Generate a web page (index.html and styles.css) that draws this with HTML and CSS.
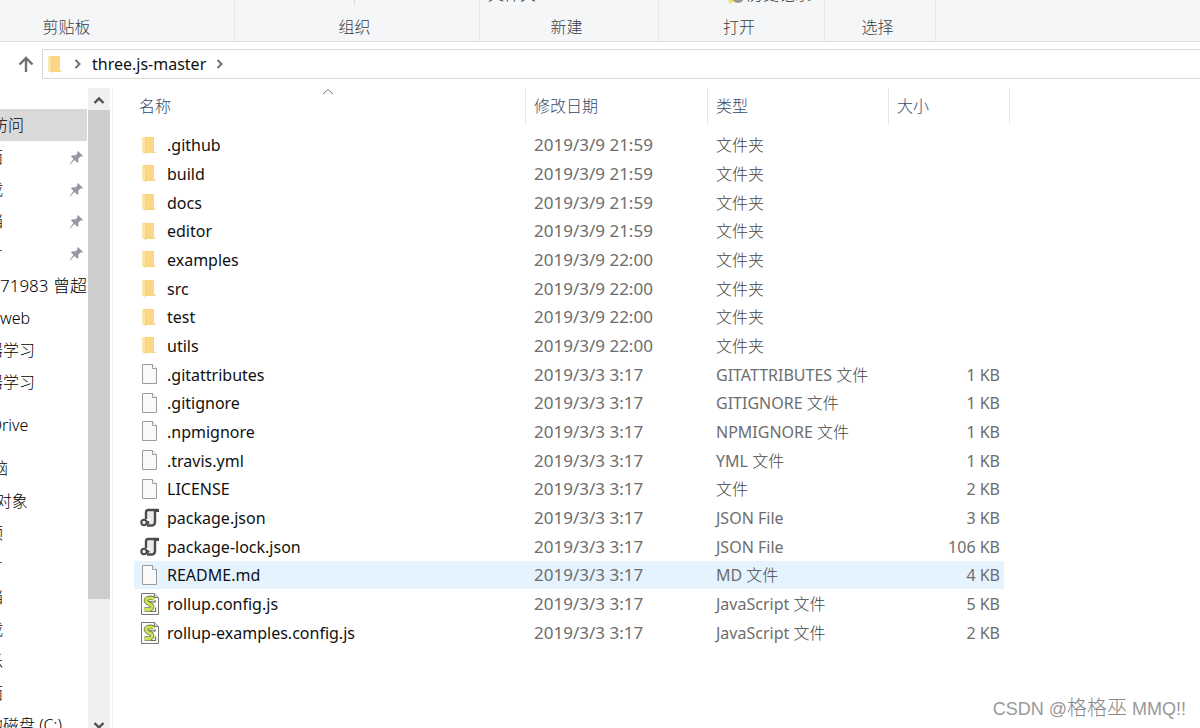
FILE: index.html
```html
<!DOCTYPE html>
<html lang="zh-CN">
<head>
<meta charset="utf-8">
<title>three.js-master</title>
<link rel="stylesheet" href="styles.css">
<script src="files.js" defer></script>
</head>
<body>
<svg class="sprites" aria-hidden="true">
  <symbol id="folder" viewBox="0 0 14 19">
    <path d="M.5 1h11.500v14l1.500 1v1H4L.5 16z" fill="#f8d580"/>
    <path d="M.5 1L4 2.500v16L.5 16.500z" fill="#fbe4a2"/>
    <path d="M4 2.500h7.500v13H4z" fill="#fad888"/>
    <path d="M3.500 3h.8v14h-.8z" fill="#efc76c"/>
  </symbol>
  <symbol id="file" viewBox="0 0 18 21">
    <path d="M1.500 .5h10l4 4v15h-14z" fill="#f9f9f9" stroke="#9c9c9c"/>
    <path d="M11.500 .5v4h4" fill="#fff" stroke="#9c9c9c"/>
  </symbol>
  <symbol id="json" viewBox="0 0 20 20">
    <path d="M6 3h9v13h-5V11H6z" fill="#ececec"/>
    <path d="M6 11V4Q6 2 8.500 2H18.500M15 2.500V14Q15 17.500 11 17.500H7" fill="none" stroke="#4b4b4b" stroke-width="2.400"/>
    <path d="M16 1h3v3h-3z" fill="#4b4b4b"/>
    <circle cx="4" cy="14.500" r="2.700" fill="#eee" stroke="#4b4b4b" stroke-width="2"/>
    <circle cx="8" cy="14.500" r="1.500" fill="#4b4b4b"/>
  </symbol>
  <symbol id="js" viewBox="0 0 20 22">
    <path d="M1.500 .5h13l4 4v17h-17z" fill="#fcfcfc" stroke="#777"/>
    <path d="M14.500 .5v4h4" fill="#ddd" stroke="#777"/>
    <path d="M14 6Q12 4 7.500 5.300Q4.500 7 7 9.500L11.500 12Q13.500 14.500 10 16.500H4.500" fill="none" stroke="#6f7746" stroke-width="4.400"/>
    <path d="M14 6Q12 4 7.500 5.300Q4.500 7 7 9.500L11.500 12Q13.500 14.500 10 16.500H4.500" fill="none" stroke="#cfe05a" stroke-width="2.800"/>
    <path d="M9 8.500l6 .5v-2M10 18.500h5.500v-4" fill="none" stroke="#6f7746" stroke-width="1.200"/>
  </symbol>
  <symbol id="pin" viewBox="0 0 15 15">
    <path d="M9 1l5 5-1.500 .8-1-.3-2.300 2.500.3 2.600-1.300 1.200L5.500 10 1 14.500.5 14 4.500 9 2 6.500 3.300 5.300 6 5.600 8.500 3.300 8.200 2z" fill="#9599a0"/>
  </symbol>
  <symbol id="chevron" viewBox="0 0 8 10">
    <path d="M1.500 1l4 4-4 4" fill="none" stroke="#707070" stroke-width="2"/>
  </symbol>
</svg>

<header class="ribbon">
  <section class="group clipboard"><h2 class="caption">剪贴板</h2></section>
  <section class="group organize"><span class="tick"></span><h2 class="caption">组织</h2></section>
  <section class="group create"><button class="tool">文件夹</button><h2 class="caption">新建</h2></section>
  <section class="group open"><button class="tool history"><svg width="18" height="20" viewBox="0 0 18 20"><path d="M0 6h6v13H2z" fill="#f3e36b"/><circle cx="11" cy="13" r="6" fill="#999"/></svg>历史记录</button><h2 class="caption">打开</h2></section>
  <section class="group select"><h2 class="caption">选择</h2></section>
</header>

<div class="address">
  <button class="up" aria-label="向上"><svg width="16" height="17" viewBox="0 0 16 17"><path d="M8 16V2M1.500 8.500L8 2l6.500 6.500" fill="none" stroke="#707070" stroke-width="2.400"/></svg></button>
  <nav class="path" aria-label="路径">
    <svg class="folder" width="14" height="19"><use href="#folder"/></svg>
    <svg width="8" height="10"><use href="#chevron"/></svg>
    <a href="#" class="crumb">three.js-master</a>
    <svg width="8" height="10"><use href="#chevron"/></svg>
  </nav>
</div>

<main class="main">
  <nav class="tree" aria-label="导航窗格">
    <a href="#" class="node current">快速访问</a>
    <a href="#" class="node child">桌面<svg class="pin"><use href="#pin"/></svg></a>
    <a href="#" class="node child">下载<svg class="pin"><use href="#pin"/></svg></a>
    <a href="#" class="node child">文档<svg class="pin"><use href="#pin"/></svg></a>
    <a href="#" class="node child">图片<svg class="pin"><use href="#pin"/></svg></a>
    <a href="#" class="node flush wide">71983 曾超</a>
    <a href="#" class="node flush">web</a>
    <a href="#" class="node child">机器学习</a>
    <a href="#" class="node child">机器学习</a>
    <a href="#" class="node root">OneDrive</a>
    <a href="#" class="node root">此电脑</a>
    <a href="#" class="node child">3D 对象</a>
    <a href="#" class="node child">视频</a>
    <a href="#" class="node child">图片</a>
    <a href="#" class="node child">文档</a>
    <a href="#" class="node child">下载</a>
    <a href="#" class="node child">音乐</a>
    <a href="#" class="node child">桌面</a>
    <a href="#" class="node child">本地磁盘 (C:)</a>
  </nav>
  <div class="scrollbar">
    <button class="arrow" aria-label="向上滚动"><svg width="12" height="8" viewBox="0 0 12 8"><path d="M1.500 7L6 2.500 10.500 7" fill="none" stroke="#505050" stroke-width="2.400"/></svg></button>
    <div class="track"><div class="thumb"></div></div>
    <button class="arrow" aria-label="向下滚动"><svg width="12" height="8" viewBox="0 0 12 8"><path d="M1.500 1L6 5.500 10.500 1" fill="none" stroke="#505050" stroke-width="2.400"/></svg></button>
  </div>
  <section class="content">
    <table class="files">
      <colgroup><col class="c-name"><col class="c-date"><col class="c-type"><col class="c-size"><col class="c-end"></colgroup>
      <thead>
        <tr>
          <th><span class="head first">名称</span><svg class="sort" width="12" height="7" viewBox="0 0 12 7"><path d="M1 6l5-4.500L11 6" fill="none" stroke="#777"/></svg></th>
          <th><span class="head">修改日期</span></th>
          <th><span class="head">类型</span></th>
          <th colspan="2"><span class="head last">大小</span></th>
        </tr>
      </thead>
      <tbody id="rows"></tbody>
    </table>
  </section>
</main>
<p class="watermark">CSDN @<span class="han">格格巫</span> MMQ!!</p>
</body>
</html>
```
FILE: files.js
```js
const files = [
  ["folder", ".github", "2019/3/9 21:59", "", "文件夹", ""],
  ["folder", "build", "2019/3/9 21:59", "", "文件夹", ""],
  ["folder", "docs", "2019/3/9 21:59", "", "文件夹", ""],
  ["folder", "editor", "2019/3/9 21:59", "", "文件夹", ""],
  ["folder", "examples", "2019/3/9 22:00", "", "文件夹", ""],
  ["folder", "src", "2019/3/9 22:00", "", "文件夹", ""],
  ["folder", "test", "2019/3/9 22:00", "", "文件夹", ""],
  ["folder", "utils", "2019/3/9 22:00", "", "文件夹", ""],
  ["file", ".gitattributes", "2019/3/3 3:17", "GITATTRIBUTES ", "文件", "1 KB"],
  ["file", ".gitignore", "2019/3/3 3:17", "GITIGNORE ", "文件", "1 KB"],
  ["file", ".npmignore", "2019/3/3 3:17", "NPMIGNORE ", "文件", "1 KB"],
  ["file", ".travis.yml", "2019/3/3 3:17", "YML ", "文件", "1 KB"],
  ["file", "LICENSE", "2019/3/3 3:17", "", "文件", "2 KB"],
  ["json", "package.json", "2019/3/3 3:17", "JSON File", "", "3 KB"],
  ["json", "package-lock.json", "2019/3/3 3:17", "JSON File", "", "106 KB"],
  ["file", "README.md", "2019/3/3 3:17", "MD ", "文件", "4 KB"],
  ["js", "rollup.config.js", "2019/3/3 3:17", "JavaScript ", "文件", "5 KB"],
  ["js", "rollup-examples.config.js", "2019/3/3 3:17", "JavaScript ", "文件", "2 KB"]
];

document.getElementById("rows").innerHTML = files.map(([icon, name, date, kind, han, size]) => `
  <tr class="${name === "README.md" ? "hover" : ""}">
    <td class="name"><span class="entry"><svg class="icon ${icon}"><use href="#${icon}"/></svg>${name}</span></td>
    <td class="date">${date}</td>
    <td class="kind">${kind}<span class="han">${han}</span></td>
    <td class="size">${size}</td>
  </tr>`).join("");
```
FILE: styles.css
```css
* { box-sizing: border-box; }

body {
  margin: 0;
  height: 100vh;
  display: flex;
  flex-direction: column;
  overflow: hidden;
  background: #fff;
  color: #1a1a1a;
  font: 16px/20px "Noto Sans", "Noto Sans CJK SC", sans-serif;
}

a { color: inherit; text-decoration: none; }
button { padding: 0; border: 0; background: none; color: inherit; font: inherit; }
svg { flex: none; }
.sprites { position: absolute; width: 0; height: 0; }

.ribbon {
  flex: none;
  display: flex;
  height: 42px;
  overflow: hidden;
  background: #f5f6f7;
  border-bottom: 1px solid #dcdddf;
}
.group {
  display: flex;
  flex-direction: column;
  justify-content: flex-end;
  align-items: center;
  padding: 0 5px 4px 0;
  border-right: 1px solid #e5e6e8;
}
.clipboard { width: 235px; padding-right: 101px; }
.organize { width: 245px; }
.create { width: 179px; }
.open { width: 166px; }
.select { width: 111px; }
.caption { margin: 0; font-size: 16px; font-weight: 300; line-height: 20px; color: #3c3c3c; }
.tool { flex: none; height: 20px; margin-bottom: 13px; align-self: flex-start; padding-left: 8px; font-weight: 300; }
.history { display: flex; align-items: center; gap: 2px; padding-left: 68px; }
.tick { width: 1px; height: 7px; margin-bottom: 11px; background: #dcdddf; }

.address { flex: none; display: flex; align-items: center; height: 46px; padding-bottom: 2px; }
.up { display: flex; margin: 0 8px 0 18px; }
.path {
  flex: 1;
  display: flex;
  align-items: center;
  height: 30px;
  padding-left: 5px;
  border: 1px solid #dadada;
  border-right: 0;
}
.path .folder { margin-right: 12px; }
.crumb { margin: 0 10px; color: #111; }

.main { flex: 1; min-height: 0; display: flex; overflow: hidden; }
.tree { width: 88px; padding-top: 21px; overflow: hidden; white-space: nowrap; }
.node { position: relative; display: block; height: 32px; width: 87px; line-height: 33px; text-indent: -40px; font-weight: 300; color: #000; }
.current { background: #d9d9d9; }
.child { text-indent: -29px; }
.flush { text-indent: 0; }
.wide { font-size: 17px; margin-bottom: 1px; }
.root { margin-top: 11px; }
.root + .child { margin-top: 1px; }
.pin { position: absolute; right: 3px; top: 9px; width: 15px; height: 15px; }

.scrollbar { width: 22px; display: flex; flex-direction: column; margin-bottom: -8px; background: #f0f0f0; }
.arrow { flex: none; display: flex; justify-content: center; align-items: center; height: 22px; padding-top: 2px; }
.track { flex: 1; }
.thumb { height: 81%; background: #cdcdcd; }

.content { flex: 1; min-width: 0; margin-left: 2px; padding-left: 21px; border-left: 1px solid #f3f3f3; }
.files { width: 876px; table-layout: fixed; border-collapse: collapse; color: #6d6d6d; }
.c-name { width: 391px; }
.c-date { width: 182px; }
.c-type { width: 181px; }
.c-size { width: 116px; }
.c-end { width: 6px; }
th { position: relative; padding: 0 0 7px; font-weight: 300; text-align: left; color: #34496a; }
.head { display: flex; align-items: center; height: 36px; padding-left: 8px; border-left: 1px solid #e5e5e5; }
.first { padding-left: 5px; border-left: 0; }
.last { border-right: 1px solid #e5e5e5; }
.sort { position: absolute; left: 188px; top: 0; }

td { height: 29px; padding: 0 0 0 9px; white-space: nowrap; }
tr:nth-child(3n + 1) td { height: 28px; }
.name { padding-left: 6px; color: #111; }
.date { font-size: 17px; }
.size { padding: 0 4px 0 0; text-align: right; }
.han { font-size: 16px; font-weight: 300; color: #444; }
.hover td { background: #e5f3ff; }
.entry { display: flex; align-items: center; }
.icon { width: 20px; height: 20px; margin-right: 7px; }
.icon.folder { width: 14px; height: 19px; margin: 0 11px 0 2px; }
.icon.file { width: 18px; height: 21px; margin: 0 8px 0 1px; }
.icon.js { height: 22px; }

.watermark { position: absolute; right: 14px; bottom: 7px; margin: 0; font: 18px/24px "Liberation Sans", "Noto Sans CJK SC", sans-serif; color: #999; }
.watermark .han { font-size: 20px; color: #888; }
```
